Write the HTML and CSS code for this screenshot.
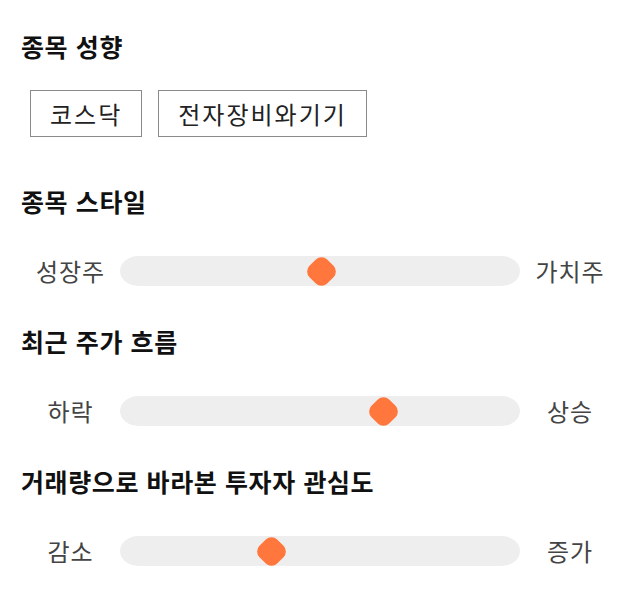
FILE: index.html
```html
<!DOCTYPE html>
<html lang="ko">
<head>
  <meta charset="UTF-8" />
  <meta name="viewport" content="width=device-width, initial-scale=1" />
  <title>종목 분석</title>
  <link rel="stylesheet" href="styles.css">
</head>
<body>

<div class="panel">
  <section class="block">
    <h2>종목 성향</h2>
    <div class="tags">
      <span class="tag">코스닥</span>
      <span class="tag">전자장비와기기</span>
    </div>
  </section>

  <section class="block">
    <h2>종목 스타일</h2>
    <div class="scale">
      <span class="scale-label">성장주</span>
      <div class="track"><span class="thumb" style="left: 50.4%"></span></div>
      <span class="scale-label">가치주</span>
    </div>
  </section>

  <section class="block">
    <h2>최근 주가 흐름</h2>
    <div class="scale">
      <span class="scale-label">하락</span>
      <div class="track"><span class="thumb" style="left: 65.8%"></span></div>
      <span class="scale-label">상승</span>
    </div>
  </section>

  <section class="block">
    <h2>거래량으로 바라본 투자자 관심도</h2>
    <div class="scale">
      <span class="scale-label">감소</span>
      <div class="track"><span class="thumb" style="left: 37.9%"></span></div>
      <span class="scale-label">증가</span>
    </div>
  </section>
</div>

</body>
</html>
```

FILE: styles.css
```css
body {
  margin: 0;
  background: #fff;
  color: #111;
  font-family: "Noto Sans CJK KR", "Noto Sans", sans-serif;
}
.panel {
  display: flex;
  flex-direction: column;
  gap: 40px;
  padding: 31px 20px 0 21px;
}
.block {
  display: flex;
  flex-direction: column;
  gap: 40px;
}
.block h2 {
  margin: 0;
  font-size: 25px;
  font-weight: 700;
  line-height: 30px;
  letter-spacing: 0.6px;
}
.tags {
  display: flex;
  gap: 16px;
  margin: -11px 0 9px 9px;
}
.tag {
  display: flex;
  align-items: center;
  height: 45px;
  padding: 0 19px;
  border: 1px solid #8a8a8a;
  font-size: 24px;
  letter-spacing: 2px;
  color: #222;
}
.scale {
  display: grid;
  grid-template-columns: 99px 1fr 100px;
  align-items: center;
  height: 30px;
}
.scale-label {
  text-align: center;
  font-size: 24px;
  line-height: 30px;
  letter-spacing: 1px;
  color: #444;
}
.track {
  position: relative;
  height: 30px;
  border-radius: 18px / 15px;
  background: #eee;
}
.thumb {
  position: absolute;
  top: 2.5px;
  width: 25px;
  height: 25px;
  margin-left: -12.5px;
  border-radius: 8px;
  background: #ff773d;
  transform: rotate(45deg);
}
```
